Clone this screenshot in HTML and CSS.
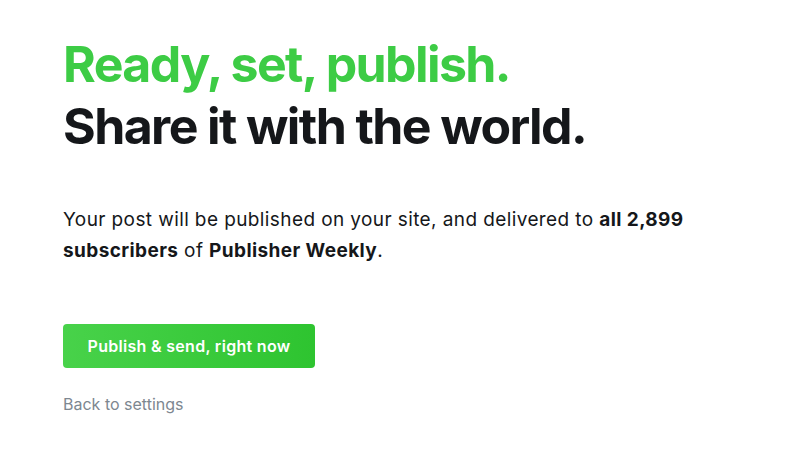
FILE: index.html
```html
<!DOCTYPE html>
<html lang="en">
  <head>
    <meta charset="UTF-8" />
    <meta name="viewport" content="width=device-width, initial-scale=1.0" />
    <title>Publish</title>
    <link rel="stylesheet" href="styles.css">
  </head>
  <body>
    <div class="publish">
      <h1 class="title">
        <span class="title-green">Ready, set, publish.</span>
        <span class="title-dark">Share it with the world.</span>
      </h1>

      <p class="message">
        Your post will be published on your site, and delivered to <strong>all 2,899
        subscribers</strong> of <strong>Publisher Weekly</strong>.
      </p>

      <button class="btn-publish">Publish &amp; send, right now</button>

      <a class="back" href="#">Back to settings</a>
    </div>
  </body>
</html>
```

FILE: styles.css
```css
body {
  margin: 0;
  background: #fff;
  font-family: Inter, "Noto Sans", sans-serif;
}

.publish {
  display: flex;
  flex-direction: column;
  align-items: flex-start;
  padding: 33px 63px 0 63px;
}

.title {
  margin: 0;
  font-size: 50px;
  font-weight: 700;
  letter-spacing: -1.6px;
  line-height: 62px;
}

.title span {
  display: block;
}

.title-green {
  color: #3dcc45;
}

.title-dark {
  color: #15171a;
}

.message {
  margin: 47px 0 0 0;
  max-width: 660px;
  font-size: 19px;
  letter-spacing: 0.4px;
  line-height: 31px;
  color: #15171a;
}

.message strong {
  font-weight: 700;
}

.btn-publish {
  margin-top: 58px;
  width: 252px;
  height: 44px;
  border: none;
  border-radius: 4px;
  background: linear-gradient(to right, #48d24a, #2ec430);
  color: #fff;
  font-family: Inter, "Noto Sans", sans-serif;
  font-size: 16px;
  font-weight: 600;
  letter-spacing: 0.3px;
  cursor: pointer;
}

.back {
  margin-top: 26px;
  font-size: 16px;
  color: #7d8790;
  text-decoration: none;
}
```
